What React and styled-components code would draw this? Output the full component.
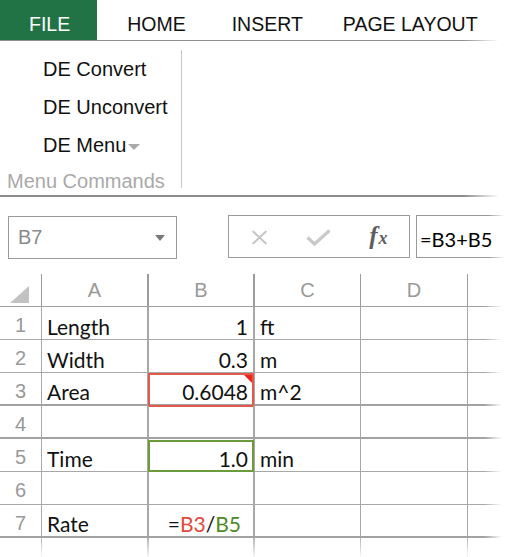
import styled, { createGlobalStyle, css } from "styled-components";

const GlobalStyle = createGlobalStyle`
  html, body {
    margin: 0;
    padding: 0;
    background: #fff;
  }
  body {
    width: 508px;
    height: 557px;
    overflow: hidden;
    font-family: "Liberation Sans", Arial, sans-serif;
  }
`;

const COLS = "42px 107px 106px 106px 107px 40px";
const LINES = [1, 2, 2, 1, 1, 0];
const HEADS = ["", "A", "B", "C", "D", ""];

const rows = [
  { n: 1, a: "Length", b: "1", c: "ft" },
  { n: 2, a: "Width", b: "0.3", c: "m" },
  { n: 3, a: "Area", b: "0.6048", c: "m^2", mark: "red", thick: true },
  { n: 4, thick: true },
  { n: 5, a: "Time", b: "1.0", c: "min", mark: "green" },
  { n: 6 },
  { n: 7, a: "Rate", formula: true, thick: true },
];

const App = () => {
  return (
    <Page>
      <GlobalStyle />
      <TabBar>
        <Tab $active>FILE</Tab>
        <Tab $gap={30}>HOME</Tab>
        <Tab $gap={46}>INSERT</Tab>
        <Tab $gap={40}>PAGE LAYOUT</Tab>
      </TabBar>

      <Ribbon>
        <Group>
          <Commands>
            <Command>DE Convert</Command>
            <Command>DE Unconvert</Command>
            <Command>
              DE Menu
              <MenuCaret />
            </Command>
          </Commands>
          <GroupLabel>Menu Commands</GroupLabel>
        </Group>
        <GroupDivider />
      </Ribbon>

      <FormulaBar>
        <NameBox>
          B7
          <NameCaret />
        </NameBox>
        <ButtonBox>
          <IconSlot>
            <svg width="17" height="15" viewBox="0 0 17 15">
              <path d="M1.5 1 L15.5 14 M15.5 1 L1.5 14" stroke="#c6c6c6" strokeWidth="2" fill="none" />
            </svg>
          </IconSlot>
          <IconSlot>
            <svg width="25" height="18" viewBox="0 0 25 18">
              <path d="M1.5 8.5 L8.5 15 L23.5 1.5" stroke="#c9c9c9" strokeWidth="3.2" fill="none" strokeLinejoin="miter" />
            </svg>
          </IconSlot>
          <IconSlot>
            <Fx>
              f<FxSub>x</FxSub>
            </Fx>
          </IconSlot>
        </ButtonBox>
        <FormulaInput>=B3+B5</FormulaInput>
      </FormulaBar>

      <Sheet>
        <HeaderRow>
          {HEADS.map((h, i) => (
            <HeadCell key={i} $line={LINES[i]}>
              {i === 0 ? (
                <svg width="20" height="18" viewBox="0 0 20 18">
                  <path d="M19 0 L19 17 L0 17 Z" fill="#c2c2c2" />
                </svg>
              ) : (
                h
              )}
            </HeadCell>
          ))}
        </HeaderRow>

        {rows.map((r) => (
          <Row key={r.n} $thick={r.thick}>
            <RowHead $line={LINES[0]}>{r.n}</RowHead>
            <Cell $line={LINES[1]}>{r.a}</Cell>
            <Cell $line={LINES[2]} $right $mark={r.mark} $pr={r.formula ? 12 : 5}>
              {r.formula ? (
                <>
                  =<Ref $color="#e04a3d">B3</Ref>/<Ref $color="#4f8a26">B5</Ref>
                </>
              ) : (
                r.b
              )}
            </Cell>
            <Cell $line={LINES[3]}>{r.c}</Cell>
            <Cell $line={LINES[4]} />
            <Cell $line={LINES[5]} />
          </Row>
        ))}

        <FillerRow>
          {LINES.map((l, i) => (
            <FillerCell key={i} $line={l} />
          ))}
        </FillerRow>
      </Sheet>
    </Page>
  );
};

export default App;

const fadeRight = (color) =>
  `linear-gradient(to right, ${color} 0%, ${color} 91%, rgba(255,255,255,0) 98%)`;

const Page = styled.div`
  width: 508px;
  height: 557px;
  overflow: hidden;
  color: #111;
`;

const TabBar = styled.div`
  display: flex;
  height: 41px;
  box-sizing: border-box;
  border-bottom: 1px solid #999;
  border-image: ${fadeRight("#8f8f8f")} 1;
`;

const Tab = styled.div`
  display: flex;
  align-items: flex-end;
  flex-shrink: 0;
  height: 40px;
  box-sizing: border-box;
  padding: 0 ${(p) => (p.$active ? "27px 4px 29px" : "0 4px 0")};
  margin-left: ${(p) => p.$gap || 0}px;
  font-size: 19.5px;
  color: ${(p) => (p.$active ? "#fff" : "#111")};
  background: ${(p) => (p.$active ? "#217346" : "transparent")};
  white-space: nowrap;
`;

const Ribbon = styled.div`
  display: flex;
  padding: 9px 0 1px 7px;
  border-bottom: 2px solid #888;
  border-image: ${fadeRight("#8a8a8a")} 1;
`;

const Group = styled.div`
  display: flex;
  flex-direction: column;
  width: 174px;
`;

const Commands = styled.div`
  display: flex;
  flex-direction: column;
  padding-left: 36px;
`;

const Command = styled.div`
  display: flex;
  align-items: center;
  height: 38px;
  font-size: 20px;
  color: #111;
  white-space: nowrap;
`;

const MenuCaret = styled.span`
  width: 0;
  height: 0;
  margin: 4px 0 0 2px;
  border-left: 6px solid transparent;
  border-right: 6px solid transparent;
  border-top: 6px solid #aaa;
`;

const GroupLabel = styled.div`
  height: 30px;
  line-height: 34px;
  font-size: 20px;
  color: #a9a9a9;
  white-space: nowrap;
`;

const GroupDivider = styled.div`
  width: 1px;
  height: 138px;
  background: #c8c8c8;
`;

const FormulaBar = styled.div`
  display: flex;
  align-items: flex-start;
  margin-top: 18px;
  padding-left: 8px;

  & > * {
    flex-shrink: 0;
  }
`;

const NameBox = styled.div`
  display: flex;
  align-items: center;
  justify-content: space-between;
  box-sizing: border-box;
  width: 169px;
  height: 43px;
  margin-top: 1px;
  padding: 0 11px 0 9px;
  border: 1px solid #9a9a9a;
  font-size: 20px;
  color: #8a8a8a;
`;

const NameCaret = styled.span`
  width: 0;
  height: 0;
  border-left: 5px solid transparent;
  border-right: 5px solid transparent;
  border-top: 6px solid #7a7a7a;
`;

const ButtonBox = styled.div`
  display: flex;
  align-items: center;
  box-sizing: border-box;
  width: 182px;
  height: 43px;
  margin-left: 51px;
  padding: 2px 1px 0;
  border: 1px solid #9a9a9a;
`;

const IconSlot = styled.div`
  display: flex;
  align-items: center;
  justify-content: center;
  width: 60px;
`;

const Fx = styled.span`
  font-family: "Liberation Serif", "Times New Roman", serif;
  font-style: italic;
  font-weight: bold;
  font-size: 25px;
  color: #5e5e5e;
  margin-top: -4px;
`;

const FxSub = styled.span`
  font-size: 18px;
  margin-left: 1px;
`;

const FormulaInput = styled.div`
  display: flex;
  align-items: center;
  box-sizing: border-box;
  width: 92px;
  height: 43px;
  margin-left: 6px;
  padding: 4px 0 0 3px;
  border: 1px solid #9a9a9a;
  border-right: none;
  border-image: linear-gradient(to right, #9a9a9a 0%, #9a9a9a 78%, rgba(255,255,255,0) 96%) 1;
  font-family: Lato, "Open Sans", sans-serif;
  font-size: 20px;
  line-height: 24px;
  color: #000;
  white-space: nowrap;
`;

const Sheet = styled.div`
  position: relative;
  margin-top: 15px;

  &::after {
    content: "";
    position: absolute;
    top: 0;
    right: 0;
    bottom: 0;
    width: 24px;
    background: linear-gradient(to right, rgba(255,255,255,0) 0%, #fff 75%);
  }
`;

const gridRow = css`
  display: grid;
  grid-template-columns: ${COLS};
  box-sizing: border-box;
  height: 33px;
`;

const HeaderRow = styled.div`
  ${gridRow}
  border-bottom: 1px solid #a0a0a0;
`;

const HeadCell = styled.div`
  display: flex;
  align-items: center;
  justify-content: center;
  padding-top: 1px;
  border-right: ${(p) => p.$line}px solid #9c9c9c;
  font-size: 20px;
  color: #999;

  svg {
    margin: 8px 0 0 -1px;
  }
`;

const Row = styled.div`
  ${gridRow}
  border-bottom: ${(p) => (p.$thick ? 2 : 1)}px solid ${(p) => (p.$thick ? "#a2a2a2" : "#a8a8a8")};
`;

const RowHead = styled.div`
  display: flex;
  align-items: center;
  justify-content: center;
  padding-top: 5px;
  border-right: ${(p) => p.$line}px solid #a8a8a8;
  font-size: 20px;
  color: #999;
`;

const marks = {
  red: css`
    &::after {
      content: "";
      position: absolute;
      inset: 0 -1px -3px -1px;
      border: 2px solid #e2594e;
    }
    &::before {
      content: "";
      position: absolute;
      top: 2px;
      right: 1px;
      border-top: 8px solid #e8291d;
      border-left: 8px solid transparent;
    }
  `,
  green: css`
    &::after {
      content: "";
      position: absolute;
      inset: 1px -1px -1px -1px;
      border: 2px solid #6c9b3b;
    }
  `,
};

const Cell = styled.div`
  position: relative;
  display: flex;
  align-items: flex-end;
  justify-content: ${(p) => (p.$right ? "flex-end" : "flex-start")};
  padding: 0 ${(p) => p.$pr || 0}px 0 5px;
  border-right: ${(p) => p.$line}px solid #a8a8a8;
  font-family: Lato, "Open Sans", sans-serif;
  font-size: 21px;
  line-height: 25px;
  color: #111;
  white-space: nowrap;
  ${(p) => p.$mark && marks[p.$mark]}
`;

const Ref = styled.span`
  color: ${(p) => p.$color};
`;

const FillerRow = styled.div`
  display: grid;
  grid-template-columns: ${COLS};
  height: 20px;
`;

const FillerCell = styled.div`
  border-style: solid;
  border-width: 0 ${(p) => p.$line}px 0 0;
  border-image: linear-gradient(to bottom, #b0b0b0, rgba(255,255,255,0)) 1;
`;
